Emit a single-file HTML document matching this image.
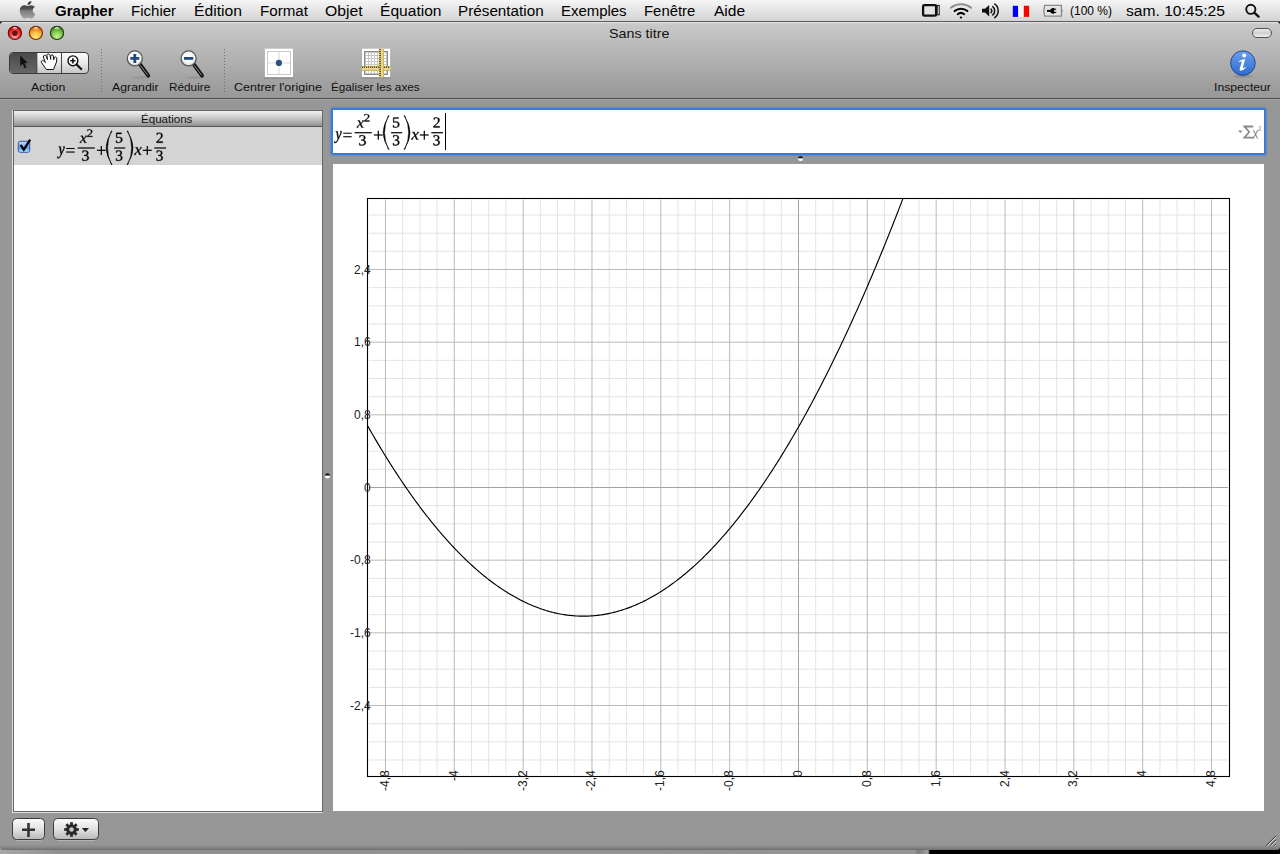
<!DOCTYPE html>
<html><head><meta charset="utf-8">
<style>
*{margin:0;padding:0;box-sizing:border-box}
html,body{width:1280px;height:854px;overflow:hidden;background:#1a1a1a;font-family:"Liberation Sans",sans-serif}
.abs{position:absolute}
#menubar{position:absolute;left:0;top:0;width:1280px;height:22px;background:linear-gradient(#f6f6f6,#e4e4e4 50%,#d4d4d4);border-bottom:1px solid #5c5c5c}
.mi{position:absolute;transform-origin:0 0;top:3px;font-size:14px;color:#000;line-height:17px;white-space:nowrap}
#win{position:absolute;left:0;top:22px;width:1280px;height:828px;background:linear-gradient(#979797 822px,#8a8a8a 825px,#6e6e6e);border-radius:4px 4px 3px 3px;overflow:hidden}
#toolbar{position:absolute;left:0;top:0;width:1280px;height:77px;background:linear-gradient(#ececec,#cdcdcd 1.5px,#c8c8c8 3px,#979797);border-bottom:1px solid #505050}
.tl{position:absolute;transform-origin:0 0;font-size:11px;color:#111;line-height:13px;white-space:nowrap}
.lb{font-family:"Liberation Sans",sans-serif;font-size:12px;fill:#222}
.serif text{font-family:"Liberation Serif",serif}
</style></head><body>
<div id="menubar">
 <div class="mi" style="left:55px;font-weight:bold;transform:scaleX(1.075)">Grapher</div>
 <div class="mi" style="left:131px;transform:scaleX(1.073)">Fichier</div>
 <div class="mi" style="left:194px;transform:scaleX(1.12)">Édition</div>
 <div class="mi" style="left:260px;transform:scaleX(1.08)">Format</div>
 <div class="mi" style="left:325px;transform:scaleX(1.125)">Objet</div>
 <div class="mi" style="left:380px;transform:scaleX(1.113)">Équation</div>
 <div class="mi" style="left:458px;transform:scaleX(1.09)">Présentation</div>
 <div class="mi" style="left:561px;transform:scaleX(1.067)">Exemples</div>
 <div class="mi" style="left:644px;transform:scaleX(1.064)">Fenêtre</div>
 <div class="mi" style="left:714px;transform:scaleX(1.11)">Aide</div>
 <div class="mi" style="left:1070px;font-size:12px">(100 %)</div>
 <div class="mi" style="left:1126px;transform:scaleX(1.115)">sam. 10:45:25</div>
</div>
<div class="abs" style="left:0;top:820px;width:1280px;height:34px;background:linear-gradient(90deg,#a6a8a8,#8e9090 60px,#939494 915px,#7a7a7a 918px,#a0a0a0 928px,#000 930px)"></div>
<div id="win">
 <div id="toolbar">
  <div class="tl" style="left:609px;top:5px;font-size:13px;transform:scaleX(1.1)">Sans titre</div>
  <div class="tl" style="left:31px;top:59px;transform:scaleX(1.12)">Action</div>
  <div class="tl" style="left:112px;top:59px;transform:scaleX(1.12)">Agrandir</div>
  <div class="tl" style="left:169px;top:59px;transform:scaleX(1.07)">Réduire</div>
  <div class="tl" style="left:234px;top:59px;transform:scaleX(1.137)">Centrer l'origine</div>
  <div class="tl" style="left:331px;top:59px;transform:scaleX(1.066)">Égaliser les axes</div>
  <div class="tl" style="left:1214px;top:59px;transform:scaleX(1.108)">Inspecteur</div>
 </div>
</div>
<svg class="abs" style="left:0;top:0" width="1280" height="100">
 <defs>
  <linearGradient id="appleg" x1="0" y1="0" x2="0" y2="1">
   <stop offset="0" stop-color="#3c3c3c"/><stop offset="0.45" stop-color="#505050"/><stop offset="0.55" stop-color="#7a7a7a"/><stop offset="1" stop-color="#a8a8a8"/>
  </linearGradient>
  <radialGradient id="redg" cx="0.5" cy="0.75" r="0.7">
   <stop offset="0" stop-color="#ffb4b4"/><stop offset="0.5" stop-color="#ff3a3a"/><stop offset="0.85" stop-color="#e01010"/><stop offset="1" stop-color="#a00000"/>
  </radialGradient>
  <radialGradient id="orag" cx="0.5" cy="0.8" r="0.75">
   <stop offset="0" stop-color="#ffec78"/><stop offset="0.45" stop-color="#fcc048"/><stop offset="0.85" stop-color="#e87818"/><stop offset="1" stop-color="#b84800"/>
  </radialGradient>
  <radialGradient id="greg" cx="0.5" cy="0.8" r="0.75">
   <stop offset="0" stop-color="#ccf298"/><stop offset="0.45" stop-color="#90d058"/><stop offset="0.85" stop-color="#50a028"/><stop offset="1" stop-color="#2c6e10"/>
  </radialGradient>
  <linearGradient id="hl" x1="0" y1="0" x2="0" y2="1">
   <stop offset="0" stop-color="#fff" stop-opacity="0.95"/><stop offset="1" stop-color="#fff" stop-opacity="0"/>
  </linearGradient>
  <linearGradient id="segsel" x1="0" y1="0" x2="0" y2="1">
   <stop offset="0" stop-color="#4a4a4a"/><stop offset="1" stop-color="#666"/>
  </linearGradient>
  <linearGradient id="segn" x1="0" y1="0" x2="0" y2="1">
   <stop offset="0" stop-color="#fdfdfd"/><stop offset="0.5" stop-color="#e8e8e8"/><stop offset="1" stop-color="#c4c4c4"/>
  </linearGradient>
  <radialGradient id="lens" cx="0.5" cy="0.4" r="0.6">
   <stop offset="0" stop-color="#fff"/><stop offset="0.7" stop-color="#f4f4f4"/><stop offset="1" stop-color="#d0d0d0"/>
  </radialGradient>
  <linearGradient id="infog" x1="0" y1="0" x2="0" y2="1">
   <stop offset="0" stop-color="#6aa0ee"/><stop offset="1" stop-color="#2f6ad0"/>
  </linearGradient>
  <linearGradient id="pillg" x1="0" y1="0" x2="0" y2="1">
   <stop offset="0" stop-color="#f0f0f0"/><stop offset="0.5" stop-color="#d0d0d0"/><stop offset="1" stop-color="#f4f4f4"/>
  </linearGradient>
  <linearGradient id="ruler" x1="0" y1="0" x2="1" y2="0">
   <stop offset="0" stop-color="#c8a848"/><stop offset="0.6" stop-color="#f0e0a0"/><stop offset="1" stop-color="#c8a848"/>
  </linearGradient>
  <linearGradient id="rulerh" x1="0" y1="0" x2="0" y2="1">
   <stop offset="0" stop-color="#c8a848"/><stop offset="0.6" stop-color="#f0e0a0"/><stop offset="1" stop-color="#c8a848"/>
  </linearGradient>
  <pattern id="gridp" x="365" y="52" width="3" height="3" patternUnits="userSpaceOnUse">
   <rect width="3" height="3" fill="#fff"/><path d="M0,0.5H3M0.5,0V3" stroke="#c6c6c6" stroke-width="1"/>
  </pattern>
 </defs>
 <!-- apple -->
 <g transform="translate(19.8,0.9) scale(0.0412,0.0396) translate(-4,-32)">
  <path fill="url(#appleg)" d="M318.7 268.7c-.2-36.7 16.4-64.4 50-84.8-18.8-26.9-47.2-41.7-84.7-44.6-35.5-2.8-74.3 20.7-88.5 20.7-15 0-49.4-19.7-76.4-19.7C63.3 141.2 4 184.8 4 273.5q0 39.3 14.4 81.2c12.8 36.7 59 126.7 107.2 125.2 25.2-.6 43-17.9 75.8-17.9 31.8 0 48.3 17.9 76.4 17.9 48.6-.7 90.4-82.5 102.6-119.3-65.2-30.7-61.7-90-61.7-91.9zm-56.6-164.2c27.3-32.4 24.8-61.9 24-72.5-24.1 1.4-52 16.4-67.9 34.9-17.5 19.8-27.8 44.3-25.6 71.9 26.1 2 49.9-11.4 69.5-34.3z"/>
 </g>
 <!-- display icon -->
 <rect x="923.1" y="5.2" width="13" height="10.5" rx="1.2" fill="#e4e4e4" stroke="#111" stroke-width="2.3"/>
 <rect x="937.2" y="5.4" width="2" height="9.4" fill="#fafafa" stroke="#111" stroke-width="1"/>
 <!-- wifi -->
 <g fill="none" stroke-linecap="round">
  <path d="M950.8,7.8 A16.3,16.3 0 0 1 971.1,7.8" stroke="#8e8e8e" stroke-width="1.9"/>
  <path d="M954.6,11.1 A9.7,9.7 0 0 1 967.4,11.1" stroke="#000" stroke-width="2"/>
  <path d="M957.7,14.2 A5.2,5.2 0 0 1 964.2,14.2" stroke="#000" stroke-width="2"/>
 </g>
 <ellipse cx="960.9" cy="17.5" rx="1.2" ry="0.9" fill="#000"/>
 <!-- volume -->
 <path d="M982,8.8 H985 L989.2,4.9 V16.4 L985,12.6 H982 Z" fill="#111"/>
 <g fill="none" stroke="#111" stroke-width="1.5">
  <path d="M990.6,8.6 A2.6,2.6 0 0 1 990.6,13"/>
  <path d="M992.3,6.2 A5.6,5.6 0 0 1 992.3,15.4"/>
  <path d="M994.3,3.6 A8.6,8.6 0 0 1 994.3,18"/>
 </g>
 <!-- flag -->
 <rect x="1012.8" y="5.8" width="5.4" height="11.1" fill="#0000ff"/>
 <rect x="1018.2" y="5.8" width="5.6" height="11.1" fill="#f5f5f5"/>
 <rect x="1023.8" y="5.8" width="5.3" height="11.1" fill="#ff0000"/>
 <!-- battery -->
 <path d="M1044.6,5.4 H1061.4 V16.2 H1044.6 Q1043.2,10.8 1044.6,5.4 Z" fill="#e4e4e4" stroke="#8a8a8a" stroke-width="1.3"/>
 <path d="M1062.2,9 Q1064.2,10.8 1062.2,12.6 Z" fill="#9a9a9a"/>
 <rect x="1047" y="9.9" width="3.6" height="2" fill="#000"/>
 <path d="M1054.2,8 H1052.6 Q1050,8.6 1050,10.9 Q1050,13.1 1052.6,13.7 H1054.2 Z" fill="#000"/>
 <rect x="1054" y="8.7" width="2.2" height="1.1" fill="#000"/>
 <rect x="1054" y="11.9" width="2.2" height="1.1" fill="#000"/>
 <!-- spotlight -->
 <circle cx="1250.8" cy="9.3" r="4.6" fill="none" stroke="#111" stroke-width="1.9"/>
 <path d="M1254.2,12.7 L1258.6,16.6" stroke="#111" stroke-width="2.4" stroke-linecap="round"/>
 <!-- traffic lights -->
 <g>
  <circle cx="14.9" cy="32.9" r="6.6" fill="url(#redg)" stroke="#6a0808" stroke-width="1.1"/>
  <circle cx="14.9" cy="33.2" r="2.7" fill="#5e1414"/>
  <ellipse cx="14.9" cy="28.6" rx="2.4" ry="1.5" fill="url(#hl)"/>
  <circle cx="35.9" cy="32.9" r="6.6" fill="url(#orag)" stroke="#7a3000" stroke-width="1.1"/>
  <ellipse cx="35.9" cy="28.6" rx="2.4" ry="1.5" fill="url(#hl)"/>
  <circle cx="57" cy="32.9" r="6.6" fill="url(#greg)" stroke="#163e08" stroke-width="1.1"/>
  <ellipse cx="57" cy="28.6" rx="2.4" ry="1.5" fill="url(#hl)"/>
 </g>
 <!-- pill -->
 <rect x="1252.5" y="28.5" width="19" height="9" rx="4.5" fill="url(#pillg)" stroke="#444" stroke-width="0.9"/>
 <!-- segmented control -->
 <rect x="9.5" y="52.5" width="79" height="21" rx="3.5" fill="url(#segn)" stroke="#3a3a3a" stroke-width="1"/>
 <path d="M13,53 H36.6 V73 H13 Q10,73 10,70 V56 Q10,53 13,53 Z" fill="url(#segsel)"/>
 <line x1="36.8" y1="53" x2="36.8" y2="73" stroke="#333" stroke-width="1"/>
 <line x1="61.5" y1="53" x2="61.5" y2="73" stroke="#444" stroke-width="1"/>
 <path d="M20.2,55.6 L20.2,66.2 L22.7,63.8 L24.6,68.2 L26.4,67.4 L24.6,63 L27.8,63 Z" fill="#111"/>
 <!-- hand -->
 <path d="M46.4,69.5 L41.3,62.3 Q41,61 42.3,60.6 Q43.3,60.4 44.6,61.8 L45.4,62.5 L43.4,57 Q43.2,55.4 44.6,55.2 Q45.8,55.1 46.3,56.3 L47.5,59.6 L46.9,55.3 Q46.9,54.1 48.3,54 Q49.7,54 50,55.3 L50.7,59.4 L50.7,55.9 Q50.8,54.9 52,54.9 Q53.3,55 53.4,56 L53.7,59.9 L54.2,57.8 Q54.6,56.8 55.6,57 Q56.8,57.3 56.8,58.4 L56.5,62 L53.4,69.5 Z" fill="#fff" stroke="#111" stroke-width="1" stroke-linejoin="round"/>
 <!-- zoom tool -->
 <circle cx="72.9" cy="60.8" r="4.9" fill="#fff" stroke="#111" stroke-width="1.4"/>
 <path d="M70.3,60.8 H75.5 M72.9,58.2 V63.4" stroke="#111" stroke-width="1.6"/>
 <path d="M76.6,64.5 L81.2,69" stroke="#111" stroke-width="2.2" stroke-linecap="round"/>
 <!-- dotted separators -->
 <line x1="101.5" y1="49" x2="101.5" y2="93" stroke="#707070" stroke-width="1" stroke-dasharray="1 2"/>
 <line x1="224.5" y1="49" x2="224.5" y2="93" stroke="#707070" stroke-width="1" stroke-dasharray="1 2"/>
 <!-- agrandir -->
 <ellipse cx="141" cy="77.5" rx="9" ry="1.4" fill="#000" opacity="0.08"/>
 <path d="M140.2,64.6 L148.2,75.6" stroke="#111" stroke-width="3.8" stroke-linecap="round"/>
 <path d="M140.6,65.6 L147.6,75" stroke="#c8c8c8" stroke-width="0.7" stroke-linecap="round"/>
 <circle cx="134.8" cy="58.4" r="7.5" fill="url(#lens)" stroke="#5a5a5a" stroke-width="1.3"/>
 <path d="M130.3,58.4 H139.3 M134.8,53.9 V62.9" stroke="#1f4b7d" stroke-width="2.8"/>
 <!-- reduire -->
 <ellipse cx="195" cy="77.5" rx="9" ry="1.4" fill="#000" opacity="0.08"/>
 <path d="M194,64.6 L202,75.6" stroke="#111" stroke-width="3.8" stroke-linecap="round"/>
 <path d="M194.4,65.6 L201.4,75" stroke="#c8c8c8" stroke-width="0.7" stroke-linecap="round"/>
 <circle cx="188.6" cy="58.4" r="7.5" fill="url(#lens)" stroke="#5a5a5a" stroke-width="1.3"/>
 <path d="M184,58.4 H193.2" stroke="#1f4b7d" stroke-width="2.8"/>
 <!-- centrer -->
 <rect x="264.2" y="49.2" width="29.5" height="29.5" fill="#555" opacity="0.35"/>
 <rect x="264.7" y="48.7" width="28.5" height="28.5" fill="#fff"/>
 <rect x="267.5" y="51.5" width="23" height="23" fill="none" stroke="#c4c4c4" stroke-width="0.9"/>
 <path d="M278.9,52 V74 M268,62.9 H290" stroke="#e2e2e2" stroke-width="1.4"/>
 <circle cx="278.9" cy="62.9" r="3.1" fill="#2a527e"/>
 <!-- egaliser -->
 <rect x="361.3" y="49.2" width="29.5" height="29.5" fill="#555" opacity="0.35"/>
 <rect x="361.8" y="48.7" width="28.5" height="28.5" fill="#fff"/>
 <rect x="364.5" y="51.5" width="23" height="23" fill="url(#gridp)" stroke="#8a8a8a" stroke-width="1"/>
 <rect x="361.8" y="66" width="28.5" height="4.9" fill="url(#rulerh)"/>
 <path d="M362,67.2 H379 M384,67.2 H390" stroke="#5e4c1c" stroke-width="1.6" stroke-dasharray="1 1"/>
 <rect x="378.9" y="48.7" width="5.1" height="28.5" fill="url(#ruler)"/>
 <path d="M380.2,49 V77" stroke="#5e4c1c" stroke-width="1.6" stroke-dasharray="1 1"/>
 <!-- info -->
 <ellipse cx="1243" cy="76.3" rx="10" ry="1.6" fill="#000" opacity="0.12"/>
 <circle cx="1242.9" cy="63.1" r="12.3" fill="url(#infog)" stroke="#1e3f80" stroke-width="0.9"/>
 <circle cx="1244.2" cy="55.6" r="2" fill="#fff"/>
 <path d="M1238.8,61.2 Q1241.5,59.3 1245.2,59.2 L1242.9,67.4 Q1242.7,68.5 1243.7,67.9 L1245.4,66.7 L1245.9,67.5 Q1243.1,70.8 1240.8,70.8 Q1239.2,70.6 1239.7,68.8 L1241.8,61.9 Q1241.7,61.1 1239.1,61.9 Z" fill="#fff"/>
</svg>

<div class="abs" style="left:0;top:99px;width:1280px;height:1px;background:#a2a2a2"></div>
<!-- panels -->
<div class="abs" style="left:12px;top:110px;width:311px;height:703px;background:#dcdcdc"></div>
<div class="abs" style="left:13px;top:110px;width:310px;height:702px;background:#666"></div>
<div class="abs" style="left:14px;top:110px;width:308px;height:701px;background:#fff"></div>
<div class="abs" style="left:13px;top:110px;width:310px;height:1px;background:#6a6a6a"></div>
<div class="abs" style="left:14px;top:111px;width:308px;height:16px;background:linear-gradient(#f0f0f0,#d8d8d8 30%,#a8a8a8 80%,#8c8c8c);border-bottom:1px solid #5a5a5a"></div>
<div class="tl" style="left:141px;top:113px;transform:scaleX(1.05)">Équations</div>
<div class="abs" style="left:14px;top:127px;width:308px;height:38px;background:#d4d4d4"></div>
<div class="abs" style="left:331px;top:108px;width:935px;height:47px;border:2px solid #3b7dd0;border-radius:2px;background:#fff;box-shadow:0 0 1.5px 1px rgba(70,130,210,0.55)"></div>
<div class="abs" style="left:333px;top:164px;width:931px;height:647px;background:#fff"></div>
<svg class="abs" style="left:0;top:0" width="1280" height="854">
<line x1="402.67" y1="199.5" x2="402.67" y2="774.5" stroke="#e4e4e4" stroke-width="1"/>
<line x1="419.88" y1="199.5" x2="419.88" y2="774.5" stroke="#e4e4e4" stroke-width="1"/>
<line x1="437.09" y1="199.5" x2="437.09" y2="774.5" stroke="#e4e4e4" stroke-width="1"/>
<line x1="471.51" y1="199.5" x2="471.51" y2="774.5" stroke="#e4e4e4" stroke-width="1"/>
<line x1="488.72" y1="199.5" x2="488.72" y2="774.5" stroke="#e4e4e4" stroke-width="1"/>
<line x1="505.93" y1="199.5" x2="505.93" y2="774.5" stroke="#e4e4e4" stroke-width="1"/>
<line x1="540.35" y1="199.5" x2="540.35" y2="774.5" stroke="#e4e4e4" stroke-width="1"/>
<line x1="557.56" y1="199.5" x2="557.56" y2="774.5" stroke="#e4e4e4" stroke-width="1"/>
<line x1="574.77" y1="199.5" x2="574.77" y2="774.5" stroke="#e4e4e4" stroke-width="1"/>
<line x1="609.19" y1="199.5" x2="609.19" y2="774.5" stroke="#e4e4e4" stroke-width="1"/>
<line x1="626.40" y1="199.5" x2="626.40" y2="774.5" stroke="#e4e4e4" stroke-width="1"/>
<line x1="643.61" y1="199.5" x2="643.61" y2="774.5" stroke="#e4e4e4" stroke-width="1"/>
<line x1="678.03" y1="199.5" x2="678.03" y2="774.5" stroke="#e4e4e4" stroke-width="1"/>
<line x1="695.24" y1="199.5" x2="695.24" y2="774.5" stroke="#e4e4e4" stroke-width="1"/>
<line x1="712.45" y1="199.5" x2="712.45" y2="774.5" stroke="#e4e4e4" stroke-width="1"/>
<line x1="746.87" y1="199.5" x2="746.87" y2="774.5" stroke="#e4e4e4" stroke-width="1"/>
<line x1="764.08" y1="199.5" x2="764.08" y2="774.5" stroke="#e4e4e4" stroke-width="1"/>
<line x1="781.29" y1="199.5" x2="781.29" y2="774.5" stroke="#e4e4e4" stroke-width="1"/>
<line x1="815.71" y1="199.5" x2="815.71" y2="774.5" stroke="#e4e4e4" stroke-width="1"/>
<line x1="832.92" y1="199.5" x2="832.92" y2="774.5" stroke="#e4e4e4" stroke-width="1"/>
<line x1="850.13" y1="199.5" x2="850.13" y2="774.5" stroke="#e4e4e4" stroke-width="1"/>
<line x1="884.55" y1="199.5" x2="884.55" y2="774.5" stroke="#e4e4e4" stroke-width="1"/>
<line x1="901.76" y1="199.5" x2="901.76" y2="774.5" stroke="#e4e4e4" stroke-width="1"/>
<line x1="918.97" y1="199.5" x2="918.97" y2="774.5" stroke="#e4e4e4" stroke-width="1"/>
<line x1="953.39" y1="199.5" x2="953.39" y2="774.5" stroke="#e4e4e4" stroke-width="1"/>
<line x1="970.60" y1="199.5" x2="970.60" y2="774.5" stroke="#e4e4e4" stroke-width="1"/>
<line x1="987.81" y1="199.5" x2="987.81" y2="774.5" stroke="#e4e4e4" stroke-width="1"/>
<line x1="1022.23" y1="199.5" x2="1022.23" y2="774.5" stroke="#e4e4e4" stroke-width="1"/>
<line x1="1039.44" y1="199.5" x2="1039.44" y2="774.5" stroke="#e4e4e4" stroke-width="1"/>
<line x1="1056.65" y1="199.5" x2="1056.65" y2="774.5" stroke="#e4e4e4" stroke-width="1"/>
<line x1="1091.07" y1="199.5" x2="1091.07" y2="774.5" stroke="#e4e4e4" stroke-width="1"/>
<line x1="1108.28" y1="199.5" x2="1108.28" y2="774.5" stroke="#e4e4e4" stroke-width="1"/>
<line x1="1125.49" y1="199.5" x2="1125.49" y2="774.5" stroke="#e4e4e4" stroke-width="1"/>
<line x1="1159.91" y1="199.5" x2="1159.91" y2="774.5" stroke="#e4e4e4" stroke-width="1"/>
<line x1="1177.12" y1="199.5" x2="1177.12" y2="774.5" stroke="#e4e4e4" stroke-width="1"/>
<line x1="1194.33" y1="199.5" x2="1194.33" y2="774.5" stroke="#e4e4e4" stroke-width="1"/>
<line x1="369.0" y1="759.99" x2="1228.0" y2="759.99" stroke="#e4e4e4" stroke-width="1"/>
<line x1="369.0" y1="741.82" x2="1228.0" y2="741.82" stroke="#e4e4e4" stroke-width="1"/>
<line x1="369.0" y1="723.66" x2="1228.0" y2="723.66" stroke="#e4e4e4" stroke-width="1"/>
<line x1="369.0" y1="687.33" x2="1228.0" y2="687.33" stroke="#e4e4e4" stroke-width="1"/>
<line x1="369.0" y1="669.16" x2="1228.0" y2="669.16" stroke="#e4e4e4" stroke-width="1"/>
<line x1="369.0" y1="650.99" x2="1228.0" y2="650.99" stroke="#e4e4e4" stroke-width="1"/>
<line x1="369.0" y1="614.66" x2="1228.0" y2="614.66" stroke="#e4e4e4" stroke-width="1"/>
<line x1="369.0" y1="596.50" x2="1228.0" y2="596.50" stroke="#e4e4e4" stroke-width="1"/>
<line x1="369.0" y1="578.33" x2="1228.0" y2="578.33" stroke="#e4e4e4" stroke-width="1"/>
<line x1="369.0" y1="542.00" x2="1228.0" y2="542.00" stroke="#e4e4e4" stroke-width="1"/>
<line x1="369.0" y1="523.83" x2="1228.0" y2="523.83" stroke="#e4e4e4" stroke-width="1"/>
<line x1="369.0" y1="505.67" x2="1228.0" y2="505.67" stroke="#e4e4e4" stroke-width="1"/>
<line x1="369.0" y1="469.33" x2="1228.0" y2="469.33" stroke="#e4e4e4" stroke-width="1"/>
<line x1="369.0" y1="451.17" x2="1228.0" y2="451.17" stroke="#e4e4e4" stroke-width="1"/>
<line x1="369.0" y1="433.00" x2="1228.0" y2="433.00" stroke="#e4e4e4" stroke-width="1"/>
<line x1="369.0" y1="396.67" x2="1228.0" y2="396.67" stroke="#e4e4e4" stroke-width="1"/>
<line x1="369.0" y1="378.50" x2="1228.0" y2="378.50" stroke="#e4e4e4" stroke-width="1"/>
<line x1="369.0" y1="360.34" x2="1228.0" y2="360.34" stroke="#e4e4e4" stroke-width="1"/>
<line x1="369.0" y1="324.01" x2="1228.0" y2="324.01" stroke="#e4e4e4" stroke-width="1"/>
<line x1="369.0" y1="305.84" x2="1228.0" y2="305.84" stroke="#e4e4e4" stroke-width="1"/>
<line x1="369.0" y1="287.67" x2="1228.0" y2="287.67" stroke="#e4e4e4" stroke-width="1"/>
<line x1="369.0" y1="251.34" x2="1228.0" y2="251.34" stroke="#e4e4e4" stroke-width="1"/>
<line x1="369.0" y1="233.18" x2="1228.0" y2="233.18" stroke="#e4e4e4" stroke-width="1"/>
<line x1="369.0" y1="215.01" x2="1228.0" y2="215.01" stroke="#e4e4e4" stroke-width="1"/>
<line x1="385.46" y1="199.5" x2="385.46" y2="774.5" stroke="#bababa" stroke-width="1"/>
<line x1="454.30" y1="199.5" x2="454.30" y2="774.5" stroke="#bababa" stroke-width="1"/>
<line x1="523.14" y1="199.5" x2="523.14" y2="774.5" stroke="#bababa" stroke-width="1"/>
<line x1="591.98" y1="199.5" x2="591.98" y2="774.5" stroke="#bababa" stroke-width="1"/>
<line x1="660.82" y1="199.5" x2="660.82" y2="774.5" stroke="#bababa" stroke-width="1"/>
<line x1="729.66" y1="199.5" x2="729.66" y2="774.5" stroke="#bababa" stroke-width="1"/>
<line x1="867.34" y1="199.5" x2="867.34" y2="774.5" stroke="#bababa" stroke-width="1"/>
<line x1="936.18" y1="199.5" x2="936.18" y2="774.5" stroke="#bababa" stroke-width="1"/>
<line x1="1005.02" y1="199.5" x2="1005.02" y2="774.5" stroke="#bababa" stroke-width="1"/>
<line x1="1073.86" y1="199.5" x2="1073.86" y2="774.5" stroke="#bababa" stroke-width="1"/>
<line x1="1142.70" y1="199.5" x2="1142.70" y2="774.5" stroke="#bababa" stroke-width="1"/>
<line x1="1211.54" y1="199.5" x2="1211.54" y2="774.5" stroke="#bababa" stroke-width="1"/>
<line x1="369.0" y1="705.49" x2="1228.0" y2="705.49" stroke="#bababa" stroke-width="1"/>
<line x1="369.0" y1="632.83" x2="1228.0" y2="632.83" stroke="#bababa" stroke-width="1"/>
<line x1="369.0" y1="560.16" x2="1228.0" y2="560.16" stroke="#bababa" stroke-width="1"/>
<line x1="369.0" y1="414.84" x2="1228.0" y2="414.84" stroke="#bababa" stroke-width="1"/>
<line x1="369.0" y1="342.17" x2="1228.0" y2="342.17" stroke="#bababa" stroke-width="1"/>
<line x1="369.0" y1="269.51" x2="1228.0" y2="269.51" stroke="#bababa" stroke-width="1"/>
<line x1="798.50" y1="199.5" x2="798.50" y2="774.5" stroke="#a4a4a4" stroke-width="1"/>
<line x1="369.0" y1="487.50" x2="1228.0" y2="487.50" stroke="#a4a4a4" stroke-width="1"/>
<polyline points="367.39,425.43 368.73,427.79 370.07,430.13 371.41,432.46 372.74,434.77 374.08,437.07 375.42,439.35 376.76,441.62 378.10,443.88 379.44,446.12 380.78,448.34 382.12,450.56 383.46,452.75 384.79,454.93 386.13,457.10 387.47,459.25 388.81,461.39 390.15,463.51 391.49,465.62 392.83,467.71 394.17,469.79 395.50,471.86 396.84,473.91 398.18,475.94 399.52,477.96 400.86,479.97 402.20,481.96 403.54,483.94 404.88,485.90 406.22,487.84 407.55,489.78 408.89,491.69 410.23,493.60 411.57,495.49 412.91,497.36 414.25,499.22 415.59,501.06 416.93,502.89 418.27,504.71 419.60,506.51 420.94,508.29 422.28,510.06 423.62,511.82 424.96,513.56 426.30,515.29 427.64,517.00 428.98,518.70 430.31,520.38 431.65,522.05 432.99,523.71 434.33,525.34 435.67,526.97 437.01,528.58 438.35,530.17 439.69,531.75 441.03,533.32 442.36,534.87 443.70,536.41 445.04,537.93 446.38,539.44 447.72,540.93 449.06,542.41 450.40,543.87 451.74,545.32 453.07,546.75 454.41,548.17 455.75,549.58 457.09,550.97 458.43,552.34 459.77,553.70 461.11,555.05 462.45,556.38 463.79,557.70 465.12,559.00 466.46,560.29 467.80,561.56 469.14,562.82 470.48,564.06 471.82,565.29 473.16,566.50 474.50,567.70 475.83,568.89 477.17,570.06 478.51,571.21 479.85,572.35 481.19,573.48 482.53,574.59 483.87,575.69 485.21,576.77 486.55,577.84 487.88,578.89 489.22,579.93 490.56,580.95 491.90,581.96 493.24,582.96 494.58,583.94 495.92,584.90 497.26,585.85 498.59,586.79 499.93,587.71 501.27,588.61 502.61,589.50 503.95,590.38 505.29,591.24 506.63,592.09 507.97,592.92 509.31,593.74 510.64,594.55 511.98,595.34 513.32,596.11 514.66,596.87 516.00,597.61 517.34,598.34 518.68,599.06 520.02,599.76 521.36,600.45 522.69,601.12 524.03,601.78 525.37,602.42 526.71,603.05 528.05,603.66 529.39,604.26 530.73,604.84 532.07,605.41 533.40,605.97 534.74,606.51 536.08,607.03 537.42,607.54 538.76,608.04 540.10,608.52 541.44,608.98 542.78,609.44 544.12,609.87 545.45,610.30 546.79,610.70 548.13,611.10 549.47,611.48 550.81,611.84 552.15,612.19 553.49,612.52 554.83,612.84 556.16,613.15 557.50,613.44 558.84,613.71 560.18,613.98 561.52,614.22 562.86,614.45 564.20,614.67 565.54,614.87 566.88,615.06 568.21,615.24 569.55,615.39 570.89,615.54 572.23,615.67 573.57,615.78 574.91,615.88 576.25,615.97 577.59,616.04 578.92,616.09 580.26,616.14 581.60,616.16 582.94,616.18 584.28,616.17 585.62,616.16 586.96,616.12 588.30,616.08 589.64,616.02 590.97,615.94 592.31,615.85 593.65,615.74 594.99,615.62 596.33,615.49 597.67,615.34 599.01,615.18 600.35,615.00 601.68,614.81 603.02,614.60 604.36,614.37 605.70,614.14 607.04,613.89 608.38,613.62 609.72,613.34 611.06,613.04 612.40,612.73 613.73,612.41 615.07,612.07 616.41,611.71 617.75,611.34 619.09,610.96 620.43,610.56 621.77,610.15 623.11,609.72 624.44,609.28 625.78,608.82 627.12,608.35 628.46,607.86 629.80,607.36 631.14,606.85 632.48,606.32 633.82,605.77 635.16,605.21 636.49,604.64 637.83,604.05 639.17,603.45 640.51,602.83 641.85,602.19 643.19,601.55 644.53,600.88 645.87,600.21 647.21,599.52 648.54,598.81 649.88,598.09 651.22,597.35 652.56,596.60 653.90,595.84 655.24,595.06 656.58,594.27 657.92,593.46 659.25,592.63 660.59,591.80 661.93,590.94 663.27,590.07 664.61,589.19 665.95,588.30 667.29,587.38 668.63,586.46 669.97,585.52 671.30,584.56 672.64,583.59 673.98,582.61 675.32,581.61 676.66,580.59 678.00,579.57 679.34,578.52 680.68,577.46 682.01,576.39 683.35,575.30 684.69,574.20 686.03,573.09 687.37,571.95 688.71,570.81 690.05,569.65 691.39,568.47 692.73,567.28 694.06,566.08 695.40,564.86 696.74,563.63 698.08,562.38 699.42,561.11 700.76,559.84 702.10,558.54 703.44,557.24 704.77,555.91 706.11,554.58 707.45,553.23 708.79,551.86 710.13,550.48 711.47,549.08 712.81,547.68 714.15,546.25 715.49,544.81 716.82,543.36 718.16,541.89 719.50,540.41 720.84,538.91 722.18,537.40 723.52,535.87 724.86,534.33 726.20,532.77 727.53,531.20 728.87,529.61 730.21,528.01 731.55,526.40 732.89,524.77 734.23,523.13 735.57,521.47 736.91,519.79 738.25,518.10 739.58,516.40 740.92,514.68 742.26,512.95 743.60,511.20 744.94,509.44 746.28,507.67 747.62,505.88 748.96,504.07 750.30,502.25 751.63,500.41 752.97,498.57 754.31,496.70 755.65,494.82 756.99,492.93 758.33,491.02 759.67,489.10 761.01,487.16 762.34,485.21 763.68,483.24 765.02,481.26 766.36,479.26 767.70,477.25 769.04,475.23 770.38,473.19 771.72,471.13 773.06,469.06 774.39,466.98 775.73,464.88 777.07,462.77 778.41,460.64 779.75,458.50 781.09,456.34 782.43,454.17 783.77,451.98 785.10,449.78 786.44,447.56 787.78,445.33 789.12,443.09 790.46,440.83 791.80,438.55 793.14,436.26 794.48,433.96 795.82,431.64 797.15,429.31 798.49,426.96 799.83,424.60 801.17,422.22 802.51,419.83 803.85,417.42 805.19,415.00 806.53,412.56 807.86,410.11 809.20,407.65 810.54,405.17 811.88,402.67 813.22,400.16 814.56,397.64 815.90,395.10 817.24,392.55 818.58,389.98 819.91,387.40 821.25,384.80 822.59,382.19 823.93,379.56 825.27,376.92 826.61,374.27 827.95,371.60 829.29,368.91 830.62,366.21 831.96,363.50 833.30,360.77 834.64,358.02 835.98,355.27 837.32,352.49 838.66,349.71 840.00,346.90 841.34,344.09 842.67,341.25 844.01,338.41 845.35,335.55 846.69,332.67 848.03,329.78 849.37,326.88 850.71,323.96 852.05,321.02 853.38,318.07 854.72,315.11 856.06,312.13 857.40,309.14 858.74,306.13 860.08,303.11 861.42,300.07 862.76,297.02 864.10,293.95 865.43,290.87 866.77,287.78 868.11,284.67 869.45,281.54 870.79,278.40 872.13,275.25 873.47,272.08 874.81,268.90 876.15,265.70 877.48,262.49 878.82,259.26 880.16,256.02 881.50,252.76 882.84,249.49 884.18,246.20 885.52,242.90 886.86,239.59 888.19,236.26 889.53,232.91 890.87,229.55 892.21,226.18 893.55,222.79 894.89,219.39 896.23,215.97 897.57,212.54 898.91,209.09 900.24,205.63 901.58,202.15 902.92,198.66" fill="none" stroke="#000" stroke-width="1.15"/>
<rect x="367.5" y="198.5" width="862.0" height="578.0" fill="none" stroke="#000" stroke-width="1.1"/>
<text x="370.8" y="709.79" text-anchor="end" class="lb">-2,4</text>
<text x="370.8" y="637.13" text-anchor="end" class="lb">-1,6</text>
<text x="370.8" y="564.46" text-anchor="end" class="lb">-0,8</text>
<text x="370.8" y="491.80" text-anchor="end" class="lb">0</text>
<text x="370.8" y="419.14" text-anchor="end" class="lb">0,8</text>
<text x="370.8" y="346.47" text-anchor="end" class="lb">1,6</text>
<text x="370.8" y="273.81" text-anchor="end" class="lb">2,4</text>
<text transform="translate(388.96,770.3) rotate(-90)" text-anchor="end" class="lb">-4,8</text>
<text transform="translate(457.80,770.3) rotate(-90)" text-anchor="end" class="lb">-4</text>
<text transform="translate(526.64,770.3) rotate(-90)" text-anchor="end" class="lb">-3,2</text>
<text transform="translate(595.48,770.3) rotate(-90)" text-anchor="end" class="lb">-2,4</text>
<text transform="translate(664.32,770.3) rotate(-90)" text-anchor="end" class="lb">-1,6</text>
<text transform="translate(733.16,770.3) rotate(-90)" text-anchor="end" class="lb">-0,8</text>
<text transform="translate(802.00,770.3) rotate(-90)" text-anchor="end" class="lb">0</text>
<text transform="translate(870.84,770.3) rotate(-90)" text-anchor="end" class="lb">0,8</text>
<text transform="translate(939.68,770.3) rotate(-90)" text-anchor="end" class="lb">1,6</text>
<text transform="translate(1008.52,770.3) rotate(-90)" text-anchor="end" class="lb">2,4</text>
<text transform="translate(1077.36,770.3) rotate(-90)" text-anchor="end" class="lb">3,2</text>
<text transform="translate(1146.20,770.3) rotate(-90)" text-anchor="end" class="lb">4</text>
<text transform="translate(1215.04,770.3) rotate(-90)" text-anchor="end" class="lb">4,8</text>
</svg>
<svg class="abs" style="left:0;top:0" width="1280" height="854"><g fill="#000"><path d="M58.8 146.55H60.57L61.58 152.8L63.21 149.33Q63.65 148.38 63.65 147.69Q63.65 147.37 63.51 147.18Q63.36 146.99 63.2 146.93L63.25 146.55H64.57Q64.75 146.75 64.75 147.09Q64.75 147.76 64.17 148.97L61.43 154.66Q60.64 156.32 60.17 157.01Q59.71 157.7 59.26 158.03Q58.81 158.35 58.28 158.35Q57.72 158.35 57.25 158.2L57.51 156.46H57.82L57.93 157.28Q58.1 157.48 58.5 157.48Q59.44 157.48 60.48 155.17L60.79 154.47L59.52 147.15L58.74 146.93Z" stroke="#000" stroke-width="0.35"/><rect x="66.20" y="148.00" width="8.50" height="1.00"/><rect x="66.20" y="151.50" width="8.50" height="1.10"/><rect x="77.60" y="147.40" width="17.20" height="1.20"/><path d="M81.02 142.13Q81.02 142.34 81.34 142.42L81.28 142.75H79.87Q79.75 142.65 79.75 142.43Q79.75 142.23 79.99 141.93Q80.23 141.63 80.79 141.13L82.87 139.26L81.56 136.36L80.75 136.18L80.81 135.85H82.7L83.8 138.48L84.75 137.61Q85.23 137.16 85.43 136.91Q85.63 136.65 85.63 136.47Q85.63 136.39 85.56 136.34Q85.49 136.28 85.18 136.18L85.24 135.85H86.59Q86.75 135.97 86.75 136.17Q86.75 136.6 85.7 137.56L84.07 139.04L85.53 142.27L86.41 142.42L86.35 142.75H84.4L83.13 139.81L81.83 141.02Q81.41 141.41 81.22 141.66Q81.02 141.91 81.02 142.13Z" stroke="#000" stroke-width="0.35"/><path d="M92.45 136.75H87.15V135.96L88.35 135.05Q89.51 134.2 90.05 133.68Q90.59 133.16 90.83 132.6Q91.06 132.05 91.06 131.33Q91.06 130.63 90.68 130.27Q90.3 129.9 89.44 129.9Q89.09 129.9 88.73 129.98Q88.37 130.06 88.09 130.19L87.87 131.07H87.44V129.68Q88.62 129.45 89.44 129.45Q90.86 129.45 91.57 129.94Q92.28 130.44 92.28 131.33Q92.28 131.94 92 132.47Q91.72 133.01 91.14 133.54Q90.56 134.07 89.22 135.02Q88.64 135.43 88 135.92H92.45Z" stroke="#000" stroke-width="0.35"/><path d="M88.85 157.87Q88.85 159.22 87.88 159.99Q86.92 160.75 85.14 160.75Q83.66 160.75 82.34 160.43L82.25 158.32H82.76L83.12 159.72Q83.42 159.89 83.98 160.01Q84.54 160.13 85.02 160.13Q86.24 160.13 86.83 159.59Q87.41 159.05 87.41 157.79Q87.41 156.81 86.88 156.29Q86.34 155.78 85.21 155.73L84.09 155.67V155.05L85.21 154.99Q86.09 154.94 86.51 154.46Q86.93 153.98 86.93 153.01Q86.93 152 86.47 151.54Q86.02 151.08 85.02 151.08Q84.61 151.08 84.15 151.19Q83.7 151.3 83.36 151.48L83.08 152.7H82.57V150.77Q83.34 150.58 83.9 150.51Q84.47 150.45 85.02 150.45Q88.37 150.45 88.37 152.92Q88.37 153.96 87.78 154.58Q87.18 155.2 86.09 155.35Q87.51 155.5 88.18 156.13Q88.85 156.75 88.85 157.87Z" stroke="#000" stroke-width="0.35"/><rect x="96.90" y="149.70" width="8.80" height="1.20"/><rect x="100.70" y="146.00" width="1.20" height="9.00"/><path d="M112.10,131.00 Q100.30,147.80 112.10,164.60 L111.20,164.60 Q103.90,147.80 111.20,131.00 Z" stroke="#000" stroke-width="0.55" stroke-linejoin="round"/><path d="M118.79 136.88Q120.59 136.88 121.47 137.59Q122.35 138.29 122.35 139.74Q122.35 141.24 121.4 142.04Q120.44 142.85 118.67 142.85Q117.19 142.85 116.04 142.53L115.95 140.44H116.46L116.81 141.83Q117.15 142.01 117.63 142.12Q118.11 142.23 118.54 142.23Q119.77 142.23 120.34 141.68Q120.92 141.13 120.92 139.81Q120.92 138.89 120.67 138.42Q120.43 137.95 119.88 137.73Q119.34 137.51 118.42 137.51Q117.72 137.51 117.04 137.68H116.3V132.75H121.57V133.89H117V137.06Q117.84 136.88 118.79 136.88Z" stroke="#000" stroke-width="0.35"/><rect x="114.10" y="147.40" width="11.10" height="1.20"/><path d="M122.35 157.87Q122.35 159.22 121.41 159.99Q120.47 160.75 118.76 160.75Q117.32 160.75 116.03 160.43L115.95 158.32H116.45L116.79 159.72Q117.08 159.89 117.63 160.01Q118.17 160.13 118.64 160.13Q119.82 160.13 120.39 159.59Q120.96 159.05 120.96 157.79Q120.96 156.81 120.44 156.29Q119.91 155.78 118.82 155.73L117.74 155.67V155.05L118.82 154.99Q119.67 154.94 120.08 154.46Q120.49 153.98 120.49 153.01Q120.49 152 120.05 151.54Q119.6 151.08 118.64 151.08Q118.23 151.08 117.8 151.19Q117.36 151.3 117.02 151.48L116.76 152.7H116.26V150.77Q117.01 150.58 117.55 150.51Q118.1 150.45 118.64 150.45Q121.89 150.45 121.89 152.92Q121.89 153.96 121.31 154.58Q120.73 155.2 119.67 155.35Q121.05 155.5 121.7 156.13Q122.35 156.75 122.35 157.87Z" stroke="#000" stroke-width="0.35"/><path d="M127.00,131.00 Q139.00,147.80 127.00,164.60 L127.90,164.60 Q135.40,147.80 127.90,131.00 Z" stroke="#000" stroke-width="0.55" stroke-linejoin="round"/><path d="M135.61 154.08Q135.61 154.3 135.96 154.39L135.89 154.75H134.38Q134.25 154.65 134.25 154.41Q134.25 154.18 134.51 153.86Q134.76 153.53 135.37 152.99L137.6 150.96L136.19 147.81L135.32 147.61L135.38 147.25H137.41L138.59 150.11L139.6 149.16Q140.13 148.68 140.34 148.4Q140.55 148.12 140.55 147.92Q140.55 147.84 140.48 147.78Q140.4 147.72 140.07 147.61L140.13 147.25H141.58Q141.75 147.38 141.75 147.59Q141.75 148.06 140.62 149.11L138.88 150.71L140.44 154.22L141.39 154.39L141.33 154.75H139.24L137.87 151.56L136.48 152.87Q136.03 153.29 135.82 153.57Q135.61 153.84 135.61 154.08Z" stroke="#000" stroke-width="0.35"/><rect x="142.80" y="149.70" width="8.90" height="1.20"/><rect x="146.70" y="146.00" width="1.20" height="9.00"/><path d="M162.75 142.75H156.45V141.67L157.88 140.42Q159.25 139.26 159.9 138.55Q160.54 137.83 160.82 137.07Q161.1 136.31 161.1 135.33Q161.1 134.37 160.65 133.87Q160.19 133.37 159.17 133.37Q158.76 133.37 158.33 133.48Q157.9 133.58 157.57 133.76L157.3 134.97H156.8V133.07Q158.19 132.75 159.17 132.75Q160.85 132.75 161.7 133.42Q162.55 134.1 162.55 135.33Q162.55 136.16 162.22 136.89Q161.88 137.62 161.19 138.35Q160.5 139.08 158.91 140.38Q158.22 140.94 157.46 141.61H162.75Z" stroke="#000" stroke-width="0.35"/><rect x="154.30" y="147.40" width="11.70" height="1.20"/><path d="M162.75 157.87Q162.75 159.22 161.83 159.99Q160.9 160.75 159.21 160.75Q157.8 160.75 156.53 160.43L156.45 158.32H156.94L157.28 159.72Q157.57 159.89 158.1 160.01Q158.63 160.13 159.09 160.13Q160.26 160.13 160.82 159.59Q161.38 159.05 161.38 157.79Q161.38 156.81 160.87 156.29Q160.35 155.78 159.27 155.73L158.21 155.67V155.05L159.27 154.99Q160.11 154.94 160.52 154.46Q160.92 153.98 160.92 153.01Q160.92 152 160.48 151.54Q160.05 151.08 159.09 151.08Q158.7 151.08 158.27 151.19Q157.84 151.3 157.51 151.48L157.25 152.7H156.76V150.77Q157.49 150.58 158.03 150.51Q158.56 150.45 159.09 150.45Q162.3 150.45 162.3 152.92Q162.3 153.96 161.73 154.58Q161.16 155.2 160.11 155.35Q161.47 155.5 162.11 156.13Q162.75 156.75 162.75 157.87Z" stroke="#000" stroke-width="0.35"/><g transform="translate(277,-15.3)"><path d="M58.8 146.55H60.57L61.58 152.8L63.21 149.33Q63.65 148.38 63.65 147.69Q63.65 147.37 63.51 147.18Q63.36 146.99 63.2 146.93L63.25 146.55H64.57Q64.75 146.75 64.75 147.09Q64.75 147.76 64.17 148.97L61.43 154.66Q60.64 156.32 60.17 157.01Q59.71 157.7 59.26 158.03Q58.81 158.35 58.28 158.35Q57.72 158.35 57.25 158.2L57.51 156.46H57.82L57.93 157.28Q58.1 157.48 58.5 157.48Q59.44 157.48 60.48 155.17L60.79 154.47L59.52 147.15L58.74 146.93Z" stroke="#000" stroke-width="0.35"/><rect x="66.20" y="148.00" width="8.50" height="1.00"/><rect x="66.20" y="151.50" width="8.50" height="1.10"/><rect x="77.60" y="147.40" width="17.20" height="1.20"/><path d="M81.02 142.13Q81.02 142.34 81.34 142.42L81.28 142.75H79.87Q79.75 142.65 79.75 142.43Q79.75 142.23 79.99 141.93Q80.23 141.63 80.79 141.13L82.87 139.26L81.56 136.36L80.75 136.18L80.81 135.85H82.7L83.8 138.48L84.75 137.61Q85.23 137.16 85.43 136.91Q85.63 136.65 85.63 136.47Q85.63 136.39 85.56 136.34Q85.49 136.28 85.18 136.18L85.24 135.85H86.59Q86.75 135.97 86.75 136.17Q86.75 136.6 85.7 137.56L84.07 139.04L85.53 142.27L86.41 142.42L86.35 142.75H84.4L83.13 139.81L81.83 141.02Q81.41 141.41 81.22 141.66Q81.02 141.91 81.02 142.13Z" stroke="#000" stroke-width="0.35"/><path d="M92.45 136.75H87.15V135.96L88.35 135.05Q89.51 134.2 90.05 133.68Q90.59 133.16 90.83 132.6Q91.06 132.05 91.06 131.33Q91.06 130.63 90.68 130.27Q90.3 129.9 89.44 129.9Q89.09 129.9 88.73 129.98Q88.37 130.06 88.09 130.19L87.87 131.07H87.44V129.68Q88.62 129.45 89.44 129.45Q90.86 129.45 91.57 129.94Q92.28 130.44 92.28 131.33Q92.28 131.94 92 132.47Q91.72 133.01 91.14 133.54Q90.56 134.07 89.22 135.02Q88.64 135.43 88 135.92H92.45Z" stroke="#000" stroke-width="0.35"/><path d="M88.85 157.87Q88.85 159.22 87.88 159.99Q86.92 160.75 85.14 160.75Q83.66 160.75 82.34 160.43L82.25 158.32H82.76L83.12 159.72Q83.42 159.89 83.98 160.01Q84.54 160.13 85.02 160.13Q86.24 160.13 86.83 159.59Q87.41 159.05 87.41 157.79Q87.41 156.81 86.88 156.29Q86.34 155.78 85.21 155.73L84.09 155.67V155.05L85.21 154.99Q86.09 154.94 86.51 154.46Q86.93 153.98 86.93 153.01Q86.93 152 86.47 151.54Q86.02 151.08 85.02 151.08Q84.61 151.08 84.15 151.19Q83.7 151.3 83.36 151.48L83.08 152.7H82.57V150.77Q83.34 150.58 83.9 150.51Q84.47 150.45 85.02 150.45Q88.37 150.45 88.37 152.92Q88.37 153.96 87.78 154.58Q87.18 155.2 86.09 155.35Q87.51 155.5 88.18 156.13Q88.85 156.75 88.85 157.87Z" stroke="#000" stroke-width="0.35"/><rect x="96.90" y="149.70" width="8.80" height="1.20"/><rect x="100.70" y="146.00" width="1.20" height="9.00"/><path d="M112.10,131.00 Q100.30,147.80 112.10,164.60 L111.20,164.60 Q103.90,147.80 111.20,131.00 Z" stroke="#000" stroke-width="0.55" stroke-linejoin="round"/><path d="M118.79 136.88Q120.59 136.88 121.47 137.59Q122.35 138.29 122.35 139.74Q122.35 141.24 121.4 142.04Q120.44 142.85 118.67 142.85Q117.19 142.85 116.04 142.53L115.95 140.44H116.46L116.81 141.83Q117.15 142.01 117.63 142.12Q118.11 142.23 118.54 142.23Q119.77 142.23 120.34 141.68Q120.92 141.13 120.92 139.81Q120.92 138.89 120.67 138.42Q120.43 137.95 119.88 137.73Q119.34 137.51 118.42 137.51Q117.72 137.51 117.04 137.68H116.3V132.75H121.57V133.89H117V137.06Q117.84 136.88 118.79 136.88Z" stroke="#000" stroke-width="0.35"/><rect x="114.10" y="147.40" width="11.10" height="1.20"/><path d="M122.35 157.87Q122.35 159.22 121.41 159.99Q120.47 160.75 118.76 160.75Q117.32 160.75 116.03 160.43L115.95 158.32H116.45L116.79 159.72Q117.08 159.89 117.63 160.01Q118.17 160.13 118.64 160.13Q119.82 160.13 120.39 159.59Q120.96 159.05 120.96 157.79Q120.96 156.81 120.44 156.29Q119.91 155.78 118.82 155.73L117.74 155.67V155.05L118.82 154.99Q119.67 154.94 120.08 154.46Q120.49 153.98 120.49 153.01Q120.49 152 120.05 151.54Q119.6 151.08 118.64 151.08Q118.23 151.08 117.8 151.19Q117.36 151.3 117.02 151.48L116.76 152.7H116.26V150.77Q117.01 150.58 117.55 150.51Q118.1 150.45 118.64 150.45Q121.89 150.45 121.89 152.92Q121.89 153.96 121.31 154.58Q120.73 155.2 119.67 155.35Q121.05 155.5 121.7 156.13Q122.35 156.75 122.35 157.87Z" stroke="#000" stroke-width="0.35"/><path d="M127.00,131.00 Q139.00,147.80 127.00,164.60 L127.90,164.60 Q135.40,147.80 127.90,131.00 Z" stroke="#000" stroke-width="0.55" stroke-linejoin="round"/><path d="M135.61 154.08Q135.61 154.3 135.96 154.39L135.89 154.75H134.38Q134.25 154.65 134.25 154.41Q134.25 154.18 134.51 153.86Q134.76 153.53 135.37 152.99L137.6 150.96L136.19 147.81L135.32 147.61L135.38 147.25H137.41L138.59 150.11L139.6 149.16Q140.13 148.68 140.34 148.4Q140.55 148.12 140.55 147.92Q140.55 147.84 140.48 147.78Q140.4 147.72 140.07 147.61L140.13 147.25H141.58Q141.75 147.38 141.75 147.59Q141.75 148.06 140.62 149.11L138.88 150.71L140.44 154.22L141.39 154.39L141.33 154.75H139.24L137.87 151.56L136.48 152.87Q136.03 153.29 135.82 153.57Q135.61 153.84 135.61 154.08Z" stroke="#000" stroke-width="0.35"/><rect x="142.80" y="149.70" width="8.90" height="1.20"/><rect x="146.70" y="146.00" width="1.20" height="9.00"/><path d="M162.75 142.75H156.45V141.67L157.88 140.42Q159.25 139.26 159.9 138.55Q160.54 137.83 160.82 137.07Q161.1 136.31 161.1 135.33Q161.1 134.37 160.65 133.87Q160.19 133.37 159.17 133.37Q158.76 133.37 158.33 133.48Q157.9 133.58 157.57 133.76L157.3 134.97H156.8V133.07Q158.19 132.75 159.17 132.75Q160.85 132.75 161.7 133.42Q162.55 134.1 162.55 135.33Q162.55 136.16 162.22 136.89Q161.88 137.62 161.19 138.35Q160.5 139.08 158.91 140.38Q158.22 140.94 157.46 141.61H162.75Z" stroke="#000" stroke-width="0.35"/><rect x="154.30" y="147.40" width="11.70" height="1.20"/><path d="M162.75 157.87Q162.75 159.22 161.83 159.99Q160.9 160.75 159.21 160.75Q157.8 160.75 156.53 160.43L156.45 158.32H156.94L157.28 159.72Q157.57 159.89 158.1 160.01Q158.63 160.13 159.09 160.13Q160.26 160.13 160.82 159.59Q161.38 159.05 161.38 157.79Q161.38 156.81 160.87 156.29Q160.35 155.78 159.27 155.73L158.21 155.67V155.05L159.27 154.99Q160.11 154.94 160.52 154.46Q160.92 153.98 160.92 153.01Q160.92 152 160.48 151.54Q160.05 151.08 159.09 151.08Q158.7 151.08 158.27 151.19Q157.84 151.3 157.51 151.48L157.25 152.7H156.76V150.77Q157.49 150.58 158.03 150.51Q158.56 150.45 159.09 150.45Q162.3 150.45 162.3 152.92Q162.3 153.96 161.73 154.58Q161.16 155.2 160.11 155.35Q161.47 155.5 162.11 156.13Q162.75 156.75 162.75 157.87Z" stroke="#000" stroke-width="0.35"/></g></g><rect x="445" y="113" width="1" height="37" fill="#000"/></svg>
<svg class="abs" style="left:0;top:0" width="1280" height="854">
 <defs>
  <linearGradient id="btng" x1="0" y1="0" x2="0" y2="1">
   <stop offset="0" stop-color="#fcfcfc"/><stop offset="0.5" stop-color="#e2e2e2"/><stop offset="1" stop-color="#b8b8b8"/>
  </linearGradient>
  <linearGradient id="chkg" x1="0" y1="0" x2="0" y2="1">
   <stop offset="0" stop-color="#c4e0ff"/><stop offset="0.45" stop-color="#7ab4f4"/><stop offset="0.6" stop-color="#5aa0ee"/><stop offset="1" stop-color="#b8f4ff"/>
  </linearGradient>
 </defs>
 <!-- checkbox -->
 <rect x="18.3" y="141.3" width="11.4" height="11" rx="2" fill="url(#chkg)" stroke="#2c40a8" stroke-width="0.9"/>
 <path d="M20.6,144.8 L23.8,149.6 L30.2,139.6" fill="none" stroke="#000" stroke-width="2.3" stroke-linejoin="miter"/>
 <!-- splitter dots -->
 <g>
  <path d="M324.9,475.8 A2.6,2.6 0 0 1 330.1,475.8 Z" fill="#222"/>
  <path d="M324.9,475.8 A2.6,2.6 0 0 0 330.1,475.8 Z" fill="#fff"/>
  <path d="M798,158.6 A2.5,2.5 0 0 1 803,158.6 Z" fill="#222"/>
  <path d="M798,158.6 A2.5,2.5 0 0 0 803,158.6 Z" fill="#fff"/>
 </g>
 <!-- sigma -->
 <path d="M1238,130.4 H1242.6 L1240.3,133 Z" fill="#8a8a8a"/>
 <path d="M1243.2,125.6 H1253.2 V127.4 H1246.6 L1250.2,132 L1246.4,136.8 H1253.6 V138.6 H1243 V137.8 L1248.2,132 L1243.2,126.4 Z" fill="#8a8a8a"/>
 <path d="M1253.4,130.2 L1257.6,138.4 M1257.8,130.2 L1253.2,138.4" stroke="#8a8a8a" stroke-width="1.1"/>
 <path d="M1258.6,127.2 Q1259.6,125.8 1260.6,126.6 Q1261.2,127.4 1259.8,129 L1258.6,130.4 H1261.2" fill="none" stroke="#8a8a8a" stroke-width="0.7"/>
 <!-- plus button -->
 <path d="M16,840.5 H41 M57,840.5 H95" stroke="#b4b4b4" stroke-width="1"/>
 <rect x="12.5" y="818.5" width="32" height="21" rx="4" fill="url(#btng)" stroke="#3c3c3c" stroke-width="1"/>
 <path d="M28.5,823 V837 M22,829.7 H35" stroke="#333" stroke-width="2.6"/>
 <!-- gear button -->
 <rect x="53.5" y="818.5" width="45" height="21" rx="4" fill="url(#btng)" stroke="#3c3c3c" stroke-width="1"/>
 <g transform="translate(71.5,829.5)" fill="#2a2a2a">
  <circle r="5.3"/>
  <g id="teeth"><rect x="-1.4" y="-7.3" width="2.8" height="3.5"/><rect x="-1.4" y="3.8" width="2.8" height="3.5"/><rect x="-7.3" y="-1.4" width="3.5" height="2.8"/><rect x="3.8" y="-1.4" width="3.5" height="2.8"/></g>
  <g transform="rotate(45)"><rect x="-1.4" y="-7.3" width="2.8" height="3.5"/><rect x="-1.4" y="3.8" width="2.8" height="3.5"/><rect x="-7.3" y="-1.4" width="3.5" height="2.8"/><rect x="3.8" y="-1.4" width="3.5" height="2.8"/></g>
  <circle r="2.3" fill="#c8c8c8"/>
 </g>
 <path d="M81.8,828 H89 L85.4,832 Z" fill="#222"/>
 <!-- resize grip -->
 <g stroke-width="1">
  <path d="M1266.3,845.5 L1276,835.8" stroke="#333"/><path d="M1267.3,845.8 L1276.3,836.8" stroke="#ddd"/>
  <path d="M1270.3,845.5 L1276,839.8" stroke="#333"/><path d="M1271.3,845.8 L1276.3,840.8" stroke="#ddd"/>
  <path d="M1274.3,845.5 L1276,843.8" stroke="#333"/><path d="M1275.3,845.8 L1276.3,844.8" stroke="#ddd"/>
 </g>
</svg>

</body></html>
